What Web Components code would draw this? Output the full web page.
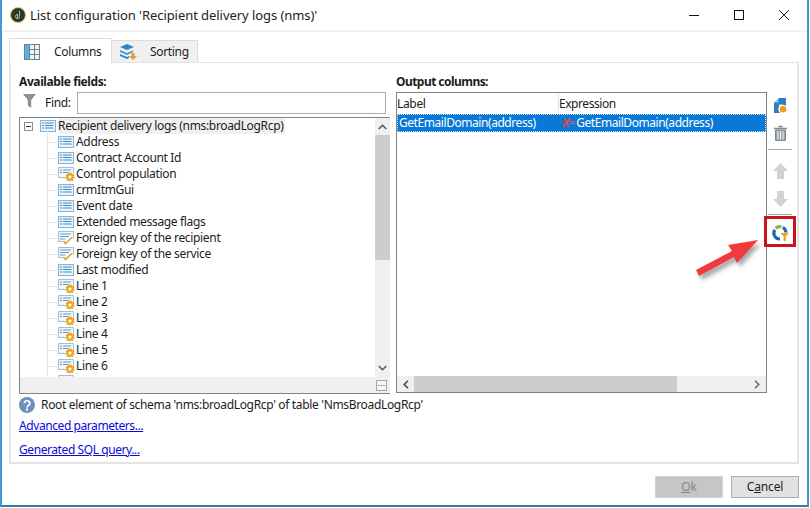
<!DOCTYPE html>
<html>
<head>
<meta charset="utf-8">
<title>List configuration</title>
<style>
  html, body { margin: 0; background: #fff; }
  body { font: 12px/16px "Noto Sans", sans-serif; color: #1c1c1c; letter-spacing: -0.33px; }
</style>
</head>
<body>
<list-dialog>
  <title-bar slot="title">List configuration 'Recipient delivery logs (nms)'</title-bar>

  <tab-strip slot="tabs"></tab-strip>

  <field-picker slot="left"></field-picker>
  <output-list slot="right"></output-list>
  <side-toolbar slot="tools"></side-toolbar>

  <info-links slot="info"></info-links>

  <dialog-button slot="buttons" disabled><u>O</u>k</dialog-button>
  <dialog-button slot="buttons">C<u>a</u>ncel</dialog-button>
</list-dialog>

<script>
const fieldLines = `<path d="M2 3h2M2 5.500h2M2 8h2M5 3h8.500M5 5.500h8.500M5 8h8.500" stroke="#3b8dcb"/>`;
const gear = `<circle cx="12" cy="10" r="2.600" fill="#fff" stroke="#eda11f" stroke-width="2.200"/><circle cx="12" cy="10" r="4" fill="none" stroke="#eda11f" stroke-width="1.300" stroke-dasharray="1.500 1.200"/>`;
const ICONS = {
  field: [16, 12, `<rect x=".5" y=".5" width="15" height="11" fill="#eaf3fa" stroke="#84b3d6"/>${fieldLines}`],
  calc: [16, 14, `<path d="M8 10.500H.5V.5h15v6" fill="#f2f7fb" stroke="#9dbfd8"/><path d="M2 3h2M2 5.500h2M5 3h8M5 5.500h6" stroke="#5d9fd0"/>${gear}`],
  key: [16, 14, `<path d="M7 10.500H.5V.5h15v7" fill="#f2f7fb" stroke="#9dbfd8"/><path d="M2 3h11M2 5.500h9M2 8h5" stroke="#5d9fd0"/><path d="M14 6.500 7.500 12.500" stroke="#e7a22b" stroke-width="1.600"/><path d="M7 13.500 5.500 12 7.500 10.500 9 12z" fill="#e7a22b"/>`],
  grid: [16, 16, `<rect width="16" height="16" fill="#75828c"/><rect x="1" y="1" width="4" height="14" fill="#57b0ea"/><path d="M6 1h4v4H6zM11 1h4v4h-4zM6 6h4v4H6zM11 6h4v4h-4zM6 11h4v4H6zM11 11h4v4h-4z" fill="#eef2f5"/>`],
  sort: [17, 16, `<path d="M7 0 14 3 7 6 0 3z" fill="#2e86c9"/><path d="M0 6 7 9 13 6.500V8L7 11 0 8z" fill="#3d97d8"/><path d="M0 10 7 13 9 12v2L7 15 0 12z" fill="#2e86c9"/><path d="M11.500 9h3v3H17l-4 4-4-4h2.500z" fill="#eb9b22"/>`],
  funnel: [13, 14, `<path d="M0 0h13L8.200 6v8L4.800 11.500V6z" fill="#8f8f8f"/>`],
  logo: [16, 16, `<circle cx="8" cy="8" r="7.500" fill="#33382c" stroke="#c9cf6a"/><path d="M7.500 12V7M9.500 4v5.500a2 2 0 1 1-2-2" fill="none" stroke="#aab79a" stroke-width="1"/>`],
  help: [16, 16, `<circle cx="8" cy="8" r="8" fill="#6f8fbf"/><path d="M5.400 6.200a2.700 2.500 0 1 1 4.300 2c-1.200.8-1.700 1.200-1.700 2.300" fill="none" stroke="#fff" stroke-width="1.800"/><rect x="7" y="11.500" width="2" height="2" fill="#fff"/>`],
  min: [10, 10, `<path d="M0 5.500h10" stroke="#111"/>`],
  max: [10, 10, `<rect x=".5" y=".5" width="9" height="9" fill="none" stroke="#111"/>`],
  close: [10, 10, `<path d="M0 0l10 10M10 0 0 10" stroke="#222"/>`],
  newcol: [13, 16, `<path d="M5 0h7v15H0V5z" fill="#2f7fbd"/><path d="M0 4.500 4.500 0v4.500z" fill="#9cc7e6"/><path d="M5 6.500h3V8H5z" fill="#e4f0f8"/><circle cx="8.800" cy="11.200" r="4.500" fill="#fff"/><circle cx="9" cy="11.300" r="3.300" fill="#f09a1c"/>`],
  trash: [13, 16, `<path d="M4.500 1.500h4M0 3.500h13" stroke="#7e8a8e" stroke-width="1.500"/><path d="M1.500 5h10v10.500h-10z" fill="#9aa4a8" stroke="#7e8a8e"/><path d="M4 6v8.500M6.500 6v8.500M9 6v8.500" stroke="#f4f4f4"/>`],
  up: [15, 16, `<path d="M7.500 0 15 8h-4v8H4V8H0z" fill="#d2d2d2"/>`],
  down: [15, 16, `<path d="M7.500 16 15 8h-4V0H4v8H0z" fill="#d2d2d2"/>`],
  chart: [17, 16, `<path d="M3.600 3.400A6 6 0 0 1 9.500 1.800" fill="none" stroke="#7fb54b" stroke-width="3.200"/><path d="M10.800 2.300A6 6 0 0 1 13.900 7.500" fill="none" stroke="#1f6fa8" stroke-width="3.200"/><path d="M2.800 4.800A6 6 0 0 0 8 14" fill="none" stroke="#1d6aa2" stroke-width="3.200"/><path d="M8.500 8h8.500l-3.100 3.400V16h-2.300v-4.600z" fill="#efa32c"/>`],
  dots: [11, 11, `<rect x=".5" y=".5" width="10" height="10" fill="#f6f6f6" stroke="#a6a6a6"/><path d="M2.500 5.500h1M5 5.500h1M7.500 5.500h1" stroke="#555"/>`],
  aUp: [9, 6, `<path d="M.7 5 4.500 1.200 8.300 5" fill="none" stroke="#555" stroke-width="1.500"/>`],
  aDown: [9, 6, `<path d="M.7 1 4.500 4.800 8.300 1" fill="none" stroke="#555" stroke-width="1.500"/>`],
  aLeft: [6, 9, `<path d="M5 .7 1.200 4.500 5 8.300" fill="none" stroke="#444" stroke-width="1.500"/>`],
  aRight: [6, 9, `<path d="M1 .7 4.800 4.500 1 8.300" fill="none" stroke="#666" stroke-width="1.500"/>`],
  expander: [9, 9, `<rect x=".5" y=".5" width="8" height="8" fill="#fff" stroke="#8e8e8e"/><path d="M2 4.500h5" stroke="#333"/>`]
};

class AppIcon extends HTMLElement {
  connectedCallback() {
    if (this.shadowRoot) return;
    const [w, h, body] = ICONS[this.getAttribute("name")];
    this.attachShadow({mode: "open"}).innerHTML = `
      <style>:host{display:inline-flex;flex:none} svg{display:block;overflow:visible}</style>
      <svg width="${w}" height="${h}" viewBox="0 0 ${w} ${h}">${body}</svg>`;
  }
}
customElements.define("app-icon", AppIcon);

class ListDialog extends HTMLElement {
  constructor() {
    super();
    this.attachShadow({mode: "open"}).innerHTML = `
      <style>
        :host{display:flex;flex-direction:column;position:relative;box-sizing:border-box;width:809px;height:507px;
          border:solid #3d9ad6;border-width:0 2px 2px 2px;border-bottom-color:#2c7fa3;background:#fff}
        .head{height:30px;border-bottom:2px solid #f1f1f1}
        .body{margin:6px 8px 0 7px;flex:none}
        .pane{box-sizing:border-box;height:402px;border:2px solid #e3e3e3;border-top-width:1px;margin-top:-1px;padding:11px 0 0 8px}
        .cols{display:flex}
        .info{margin-top:3px}
        .foot{display:flex;justify-content:flex-end;gap:8px;padding:12px 8px 0 0}
        svg.arrow{position:absolute;left:680px;top:225px;filter:drop-shadow(3px 4px 2px rgba(0,0,0,.35))}
      </style>
      <div class="head"><slot name="title"></slot></div>
      <div class="body">
        <slot name="tabs"></slot>
        <div class="pane">
          <div class="cols"><slot name="left"></slot><slot name="right"></slot><slot name="tools"></slot></div>
          <div class="info"><slot name="info"></slot></div>
        </div>
      </div>
      <div class="foot"><slot name="buttons"></slot></div>
      <svg class="arrow" width="90" height="60" viewBox="680 225 90 60">
        <path d="M694 270 730 251 726 245 756 240 735 263 732 257 697 276z" fill="#f23a3a"/>
      </svg>`;
  }
}
customElements.define("list-dialog", ListDialog);

class TitleBar extends HTMLElement {
  constructor() {
    super();
    this.attachShadow({mode: "open"}).innerHTML = `
      <style>
        :host{display:flex;align-items:center;height:30px;padding-left:8px}
        .t{margin-left:4px;font-size:13px;flex:1;color:#222;letter-spacing:-.06px}
        .w{display:flex;gap:35px;padding-right:18px}
      </style>
      <app-icon name="logo"></app-icon>
      <span class="t"><slot></slot></span>
      <div class="w"><app-icon name="min"></app-icon><app-icon name="max"></app-icon><app-icon name="close"></app-icon></div>`;
  }
}
customElements.define("title-bar", TitleBar);

class TabStrip extends HTMLElement {
  constructor() {
    super();
    this.attachShadow({mode: "open"}).innerHTML = `
      <style>
        :host{display:flex;align-items:flex-end;height:25px;position:relative;z-index:1}
        .tab{box-sizing:border-box;display:flex;align-items:center;border:1px solid #dcdcdc;border-bottom:0}
        .on{width:103px;height:25px;background:#fff;padding:2px 0 0 14px;gap:14px;border-width:1px 1px 0 1px}
        .off{width:86px;height:22px;background:#f0f0f0;padding-left:8px;gap:13px;margin-bottom:1px;border-left:0}
      </style>
      <div class="tab on"><app-icon name="grid"></app-icon><span>Columns</span></div>
      <div class="tab off"><app-icon name="sort"></app-icon><span>Sorting</span></div>`;
  }
}
customElements.define("tab-strip", TabStrip);

class ScrollBar extends HTMLElement {
  // orientation + thumb start/length come from attributes
  connectedCallback() {
    if (this.shadowRoot) return;
    const v = this.hasAttribute("vertical");
    const start = this.getAttribute("start"), len = this.getAttribute("len");
    this.attachShadow({mode: "open"}).innerHTML = `
      <style>
        :host{display:flex;position:relative;box-sizing:border-box;background:#f0f0f0;align-items:center;justify-content:space-between;flex:none;
          ${v ? "flex-direction:column;width:15px;padding:6px 0" : "height:16px;padding:0 6px"}}
        i{position:absolute;background:#cdcdcd;${v ? `left:0;right:0;top:${start}px;height:${len}px` : `top:0;bottom:0;left:${start}px;width:${len}px`}}
      </style>
      <i></i>
      <app-icon name="${v ? "aUp" : "aLeft"}"></app-icon>
      <app-icon name="${v ? "aDown" : "aRight"}"></app-icon>`;
  }
}
customElements.define("scroll-bar", ScrollBar);

class TreeRow extends HTMLElement {
  connectedCallback() {
    if (this.shadowRoot) return;
    const icon = this.getAttribute("icon") || "field";
    this.attachShadow({mode: "open"}).innerHTML = `
      <style>
        :host{display:flex;align-items:center;height:16px;position:relative;padding-left:38px;white-space:nowrap}
        :host::before{content:"";position:absolute;left:27px;top:8px;width:10px;border-top:1px solid #e4e4e4}
        .ic{width:18px;display:flex;flex:none}
      </style>
      <span class="ic"><app-icon name="${icon}"></app-icon></span><slot></slot>`;
  }
}
customElements.define("tree-row", TreeRow);

class FieldPicker extends HTMLElement {
  constructor() {
    super();
    const rows = [["Address"], ["Contract Account Id"], ["Control population", "calc"], ["crmItmGui"], ["Event date"],
      ["Extended message flags"], ["Foreign key of the recipient", "key"], ["Foreign key of the service", "key"], ["Last modified"],
      ["Line 1", "calc"], ["Line 2", "calc"], ["Line 3", "calc"], ["Line 4", "calc"], ["Line 5", "calc"], ["Line 6", "calc"], ["", "calc"]];
    this.attachShadow({mode: "open"}).innerHTML = `
      <style>
        :host{display:block;width:371px;margin-right:6px}
        b{display:block;height:16px;margin-bottom:2px;font-weight:700;letter-spacing:-.4px}
        .find{display:flex;align-items:flex-start;height:23px;margin-bottom:2px}
        .find app-icon{margin:2px 9px 0 4px}
        .find span{width:32px;line-height:22px}
        .in{box-sizing:border-box;width:309px;height:22px;border:1px solid #ababab;background:#fff}
        .box{box-sizing:border-box;height:277px;border:1px solid #828282;display:grid;grid-template:259px 16px / 355px 15px}
        .tree{overflow:hidden;position:relative}
        .tree::before{content:"";position:absolute;left:27px;top:12px;bottom:0;border-left:1px solid #e4e4e4}
        .root{display:flex;align-items:center;height:16px;padding-left:4px;white-space:nowrap}
        .root .ex{margin-right:7px}
        .root .rc{margin-right:2px}
        .root span{background:#f0f0f0;padding-right:2px}
        .blank{background:#f0f0f0}
        .corner{background:#f0f0f0;display:flex;align-items:center;justify-content:center;padding-right:2px}
      </style>
      <b>Available fields:</b>
      <div class="find"><app-icon name="funnel"></app-icon><span>Find:</span><div class="in"></div></div>
      <div class="box">
        <div class="tree">
          <div class="root"><app-icon class="ex" name="expander"></app-icon><app-icon class="rc" name="field"></app-icon><span>Recipient delivery logs (nms:broadLogRcp)</span></div>
          ${rows.map(r => `<tree-row icon="${r[1] || "field"}">${r[0]}</tree-row>`).join("")}
        </div>
        <scroll-bar vertical start="17" len="125"></scroll-bar>
        <div class="blank"></div>
        <div class="corner"><app-icon name="dots"></app-icon></div>
      </div>`;
  }
}
customElements.define("field-picker", FieldPicker);

class OutputList extends HTMLElement {
  constructor() {
    super();
    this.attachShadow({mode: "open"}).innerHTML = `
      <style>
        :host{display:block;width:371px}
        b{display:block;height:16px;margin-bottom:2px;font-weight:700;letter-spacing:-.55px}
        .box{box-sizing:border-box;height:301px;border:1px solid #828282;display:flex;flex-direction:column}
        .hd{display:grid;grid-template-columns:162px 1fr;height:21px;line-height:22px;flex:none}
        .hd span{padding-left:0;border-right:1px solid #e5e5e5}
        .hd span:last-child{border:0;letter-spacing:-.45px}
        .sel{display:grid;grid-template-columns:161px 1fr;height:18px;line-height:16px;flex:none;box-sizing:border-box;
          background:#0a78d7;color:#fff;border:1px dotted #cfe6fb;letter-spacing:-.44px}
        .sel span{padding-left:1px}
        .sel span:last-child{padding-left:3px}
        .sel em{color:#d5484f;font-weight:700;margin-right:2px;letter-spacing:-1px}
        .sel em i{color:#c25a78;font-style:normal}
        .fill{flex:1}
      </style>
      <b>Output columns:</b>
      <div class="box">
        <div class="hd"><span>Label</span><span>Expression</span></div>
        <div class="sel"><span>GetEmailDomain(address)</span><span><em>X<i>=</i></em>GetEmailDomain(address)</span></div>
        <div class="fill"></div>
        <scroll-bar start="17" len="263"></scroll-bar>
      </div>`;
  }
}
customElements.define("output-list", OutputList);

class SideToolbar extends HTMLElement {
  constructor() {
    super();
    this.attachShadow({mode: "open"}).innerHTML = `
      <style>
        :host{display:flex;flex-direction:column;align-items:center;width:32px;padding-top:22px;margin-left:-3px}
        hr{width:24px;height:1px;border:0;background:#a8a8a8;margin:0}
        .hot{box-sizing:border-box;width:32px;height:31px;border:3px solid #c9141f;display:flex;align-items:center;justify-content:center;margin-top:1px;padding-top:2px}
      </style>
      <app-icon name="newcol" style="margin-top:2px"></app-icon>
      <app-icon name="trash" style="margin-top:11px"></app-icon>
      <hr style="margin-top:8px">
      <app-icon name="up" style="margin-top:13px"></app-icon>
      <app-icon name="down" style="margin-top:12px"></app-icon>
      <hr style="margin-top:7px">
      <div class="hot"><app-icon name="chart"></app-icon></div>`;
  }
}
customElements.define("side-toolbar", SideToolbar);

class InfoLinks extends HTMLElement {
  constructor() {
    super();
    this.attachShadow({mode: "open"}).innerHTML = `
      <style>
        :host{display:block}
        .msg{display:flex;align-items:center;gap:6px;height:16px}
        a{display:block;width:max-content;color:#0a0ad6;text-decoration:underline;margin-top:5px;letter-spacing:-.42px}
        a + a{margin-top:8px}
      </style>
      <div class="msg"><app-icon name="help"></app-icon><span>Root element of schema 'nms:broadLogRcp' of table 'NmsBroadLogRcp'</span></div>
      <a href="#">Advanced parameters...</a>
      <a href="#">Generated SQL query...</a>`;
  }
}
customElements.define("info-links", InfoLinks);

class DialogButton extends HTMLElement {
  constructor() {
    super();
    this.attachShadow({mode: "open"}).innerHTML = `
      <style>
        :host{display:flex;align-items:center;justify-content:center;box-sizing:border-box;width:68px;height:22px;
          background:#e1e1e1;border:1px solid #adadad;color:#1c1c1c;letter-spacing:-.18px}
        :host([disabled]){background:#c6c6c6;border-color:#d4d4d4;color:#878787}
      </style>
      <slot></slot>`;
  }
}
customElements.define("dialog-button", DialogButton);
</script>
</body>
</html>
